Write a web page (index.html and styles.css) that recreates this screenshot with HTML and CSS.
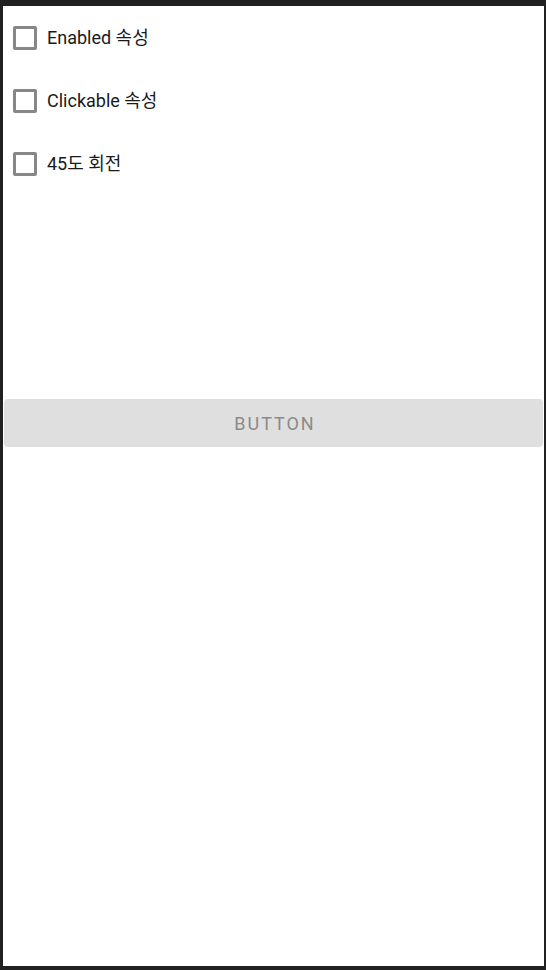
FILE: index.html
```html
<!DOCTYPE html>
<html lang="ko">
<head>
<meta charset="utf-8">
<title>Checkbox demo</title>
<link rel="stylesheet" href="styles.css">
</head>
<body>
<div class="screen">
  <div class="options">
    <label class="row"><span class="box"></span><span class="label">Enabled 속성</span></label>
    <label class="row"><span class="box"></span><span class="label">Clickable 속성</span></label>
    <label class="row"><span class="box"></span><span class="label">45도 회전</span></label>
  </div>
  <div class="btn">BUTTON</div>
</div>
</body>
</html>
```
FILE: styles.css
```css
html, body {
  margin: 0;
  padding: 0;
  background: #212121;
}
.screen {
  margin: 6px 2px 4px 3px;
  height: 960px;
  background: #ffffff;
  display: flex;
  flex-direction: column;
  font-family: Roboto, "Noto Sans CJK KR", sans-serif;
}
.options {
  display: flex;
  flex-direction: column;
}
.row {
  height: 63px;
  display: flex;
  align-items: center;
  padding-left: 10px;
}
.box {
  width: 18px;
  height: 18px;
  border: 3px solid #878787;
  border-radius: 2px;
  flex: none;
}
.label {
  margin-left: 10px;
  font-size: 18px;
  color: #1a1a1a;
  line-height: 24px;
}
.btn {
  margin: 204px 1px 0 1px;
  height: 48px;
  background: #dfdfdf;
  border-radius: 4px;
  display: flex;
  align-items: center;
  justify-content: center;
  padding-left: 3px;
  font-size: 18px;
  font-weight: 400;
  letter-spacing: 0.11em;
  color: #8a8a8a;
}
```
